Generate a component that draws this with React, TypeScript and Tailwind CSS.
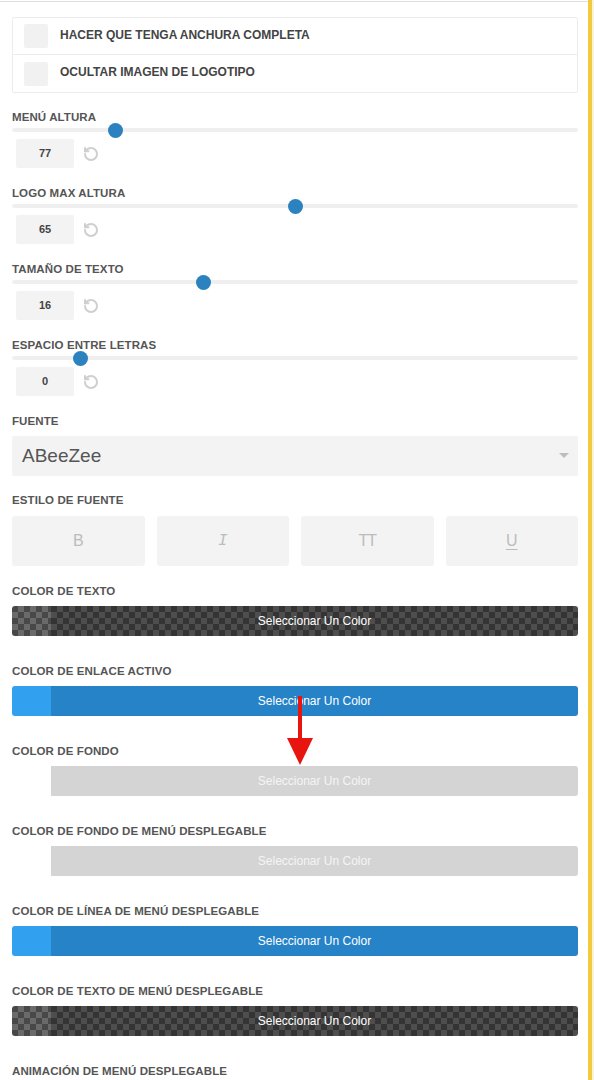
import React from "react";

const font = { fontFamily: '"Liberation Sans", Arial, sans-serif' };

function Label({ children }: { children: React.ReactNode }) {
  return (
    <div className="text-[11.5px] leading-[14px] font-bold text-[#555] uppercase tracking-[0.1px]">
      {children}
    </div>
  );
}

function ResetIcon() {
  return (
    <svg width="16" height="16" viewBox="0 0 24 24" fill="none" stroke="#cfcfcf" strokeWidth="3" strokeLinecap="round" strokeLinejoin="round">
      <path d="M3 12a9 9 0 1 0 9-9 9.75 9.75 0 0 0-6.74 2.74L3 8" />
      <path d="M3 3v5h5" />
    </svg>
  );
}

function Slider({ label, value, pos }: { label: string; value: string; pos: number }) {
  return (
    <div className="mb-[18px]">
      <Label>{label}</Label>
      <div className="relative mt-[4px] h-[4px] bg-[#efefef] rounded-full">
        <div
          className="absolute top-1/2 w-[15px] h-[15px] -mt-[7px] -ml-[7px] rounded-full bg-[#2b82bf]"
          style={{ left: pos }}
        />
      </div>
      <div className="mt-[7px] flex items-center">
        <div className="ml-[4px] w-[58px] h-[29px] bg-[#f3f3f3] rounded-[2px] flex items-center justify-center text-[11px] font-bold text-[#444]">
          {value}
        </div>
        <div className="ml-[9px] flex items-center">
          <ResetIcon />
        </div>
      </div>
    </div>
  );
}

type BarKind = "checker" | "blue" | "gray";

function ColorBar({ label, kind }: { label: string; kind: BarKind }) {
  let swatch = "";
  let main = "";
  let text = "text-white";
  if (kind === "checker") {
    swatch = "bg-[repeating-conic-gradient(#6a6a6a_0_25%,#484848_0_50%)] bg-[length:12px_12px]";
    main = "bg-[repeating-conic-gradient(#4e4e4e_0_25%,#343434_0_50%)] bg-[length:12px_12px]";
  } else if (kind === "blue") {
    swatch = "bg-[#31a0ee]";
    main = "bg-[#2683c8]";
  } else {
    swatch = "bg-white";
    main = "bg-[#d4d4d4]";
    text = "text-[#f4f4f4]";
  }
  return (
    <div className="mb-[28px]">
      <Label>{label}</Label>
      <div className="mt-[8px] flex h-[30px]">
        <div className={`w-[39px] rounded-l-[3px] ${swatch}`} />
        <div className={`flex-1 rounded-r-[3px] flex items-center justify-center text-[12px] ${text} ${main}`}>
          Seleccionar Un Color
        </div>
      </div>
    </div>
  );
}

export default function App() {
  return (
    <div className="w-[594px] h-[1080px] overflow-hidden bg-white flex" style={font}>
      <div className="relative flex-1 flex flex-col">
        <div className="h-[1px] mt-[1px] bg-[#dedede]" />
        <div className="pl-[12px] pr-[10px] pt-[15px]">
          <div className="border border-[#ececec] rounded-[2px]">
            <div className="flex items-center h-[37px] pl-[11px] border-b border-[#ececec]">
              <div className="w-[24px] h-[24px] bg-[#f1f1f1] rounded-[2px]" />
              <div className="ml-[12px] pb-[3px] text-[12px] font-bold text-[#444]">HACER QUE TENGA ANCHURA COMPLETA</div>
            </div>
            <div className="flex items-center h-[37px] pl-[11px]">
              <div className="w-[24px] h-[24px] bg-[#f1f1f1] rounded-[2px]" />
              <div className="ml-[12px] pb-[3px] text-[12px] font-bold text-[#444]">OCULTAR IMAGEN DE LOGOTIPO</div>
            </div>
          </div>

          <div className="mt-[17px]">
            <Slider label="Menú altura" value="77" pos={103} />
            <Slider label="Logo max altura" value="65" pos={283} />
            <Slider label="Tamaño de texto" value="16" pos={191} />
            <Slider label="Espacio entre letras" value="0" pos={68} />
          </div>

          <div className="mt-[2px]">
            <Label>Fuente</Label>
            <div className="mt-[8px] h-[40px] bg-[#f3f3f3] rounded-[2px] flex items-center justify-between pl-[10px] pr-[9px]">
              <span className="text-[19px] text-[#555]">ABeeZee</span>
              <svg width="10" height="6" viewBox="0 0 10 6">
                <path d="M0 0h10L5 5z" fill="#bdbdbd" />
              </svg>
            </div>
          </div>

          <div className="mt-[17px]">
            <Label>Estilo de fuente</Label>
            <div className="mt-[9px] grid grid-cols-4 gap-[12px]">
              <div className="h-[50px] bg-[#f3f3f3] rounded-[3px] flex items-center justify-center text-[16px] text-[#bcbcbc]">B</div>
              <div className="h-[50px] bg-[#f3f3f3] rounded-[3px] flex items-center justify-center text-[16px] text-[#bcbcbc] italic" style={{ fontFamily: '"Liberation Mono", monospace' }}>I</div>
              <div className="h-[50px] bg-[#f3f3f3] rounded-[3px] flex items-center justify-center text-[16px] text-[#bcbcbc] tracking-[-1px]">TT</div>
              <div className="h-[50px] bg-[#f3f3f3] rounded-[3px] flex items-center justify-center text-[16px] text-[#bcbcbc] underline underline-offset-[3px]">U</div>
            </div>
          </div>

          <div className="mt-[18px]">
            <ColorBar label="Color de texto" kind="checker" />
            <ColorBar label="Color de enlace activo" kind="blue" />
            <ColorBar label="Color de fondo" kind="gray" />
            <ColorBar label="Color de fondo de menú desplegable" kind="gray" />
            <ColorBar label="Color de línea de menú desplegable" kind="blue" />
            <ColorBar label="Color de texto de menú desplegable" kind="checker" />
            <Label>Animación de menú desplegable</Label>
          </div>
        </div>

        <svg className="absolute left-[286px] top-[696px]" width="28" height="70" viewBox="0 0 28 70">
          <rect x="12" y="0" width="4" height="44" fill="#e8140f" />
          <path d="M1 42h26L14 69z" fill="#e8140f" />
        </svg>
      </div>
      <div className="w-[4px] bg-[#f3c93d]" />
      <div className="w-[2px] bg-[#fbf3d6]" />
    </div>
  );
}
